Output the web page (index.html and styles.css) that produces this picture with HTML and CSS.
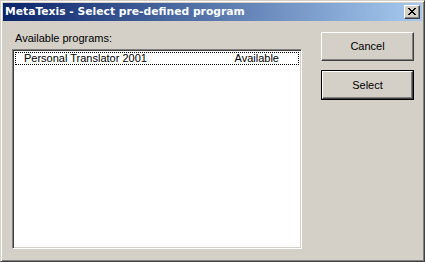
FILE: index.html
```html
<!DOCTYPE html>
<html>
<head>
<meta charset="utf-8">
<link rel="stylesheet" href="styles.css">
</head>
<body>
<div class="window">
  <div class="titlebar">
    <span class="title">MetaTexis - Select pre-defined program</span>
    <div class="close">
      <svg width="8" height="7" viewBox="0 0 8 7"><path d="M0 0h2v1h1v1h2V1h1V0h2v1H7v1H6v1H5v1h1v1h1v1h1v1H6V6H5V5H3v1H2v1H0V6h1V5h1V4h1V3H2V2H1V1H0z" fill="#000"/></svg>
    </div>
  </div>
  <div class="client">
    <div class="left">
      <div class="label">Available programs:</div>
      <div class="listbox">
        <div class="row focused"><span class="name">Personal Translator 2001</span><span class="status">Available</span></div>
      </div>
    </div>
    <div class="buttons">
      <div class="btn">Cancel</div>
      <div class="btn default"><div class="btn-inner">Select</div></div>
    </div>
  </div>
</div>
</body>
</html>
```
FILE: styles.css
```css
* { box-sizing: border-box; }
html, body { margin: 0; padding: 0; background: #d4d0c8; }
body { font-family: "Liberation Sans", Arial, sans-serif; font-size: 11px; color: #000; }
.window {
  width: 425px; height: 262px;
  background: #d4d0c8;
  border: 1px solid;
  border-color: #d4d0c8 #404040 #404040 #d4d0c8;
  box-shadow: inset 1px 1px 0 #fff, inset -1px -1px 0 #808080;
  padding: 2px;
  display: flex; flex-direction: column;
}
.titlebar {
  height: 18px;
  background: linear-gradient(to right, #0a246a, #a6caf0);
  display: flex; align-items: center; justify-content: space-between;
  padding: 0 2px 0 2px;
}
.title {
  color: #fff; font-family: "DejaVu Sans", sans-serif; font-weight: bold; font-size: 10.75px; line-height: 18px;
  white-space: nowrap;
}
.close {
  width: 16px; height: 14px;
  background: #d4d0c8;
  border: 1px solid; border-color: #fff #404040 #404040 #fff;
  box-shadow: inset -1px -1px 0 #808080;
  display: flex; align-items: center; justify-content: center;
  padding: 0 1px 1px 0;
}
.close svg { display: block; }
.client {
  flex: 1;
  display: flex;
  padding: 11px 7px 0 9px;
  gap: 19px;
}
.left { display: flex; flex-direction: column; }
.label { line-height: 13px; padding-left: 3px; margin-bottom: 4px; }
.listbox {
  width: 290px; height: 200px;
  background: #fff;
  border: 1px solid; border-color: #808080 #fff #fff #808080;
  box-shadow: inset 1px 1px 0 #404040, inset -1px -1px 0 #d4d0c8;
  padding: 2px;
}
.row {
  display: flex; justify-content: space-between;
  height: 13px; line-height: 11px;
  padding: 0 19px 0 8px;
}
.row.focused { border: 1px dotted #000; }
.buttons { display: flex; flex-direction: column; gap: 9px; }
.btn {
  width: 93px; height: 29px;
  border: 1px solid; border-color: #fff #404040 #404040 #fff;
  box-shadow: inset -1px -1px 0 #808080;
  display: flex; align-items: center; justify-content: center;
  padding-bottom: 1px;
}
.btn.default {
  height: 30px;
  border: 1px solid #000;
  box-shadow: none;
  padding: 0;
}
.btn-inner {
  width: 100%; height: 100%;
  border: 1px solid; border-color: #fff #404040 #404040 #fff;
  box-shadow: inset -1px -1px 0 #808080;
  display: flex; align-items: center; justify-content: center;
  padding-bottom: 1px;
}
```
